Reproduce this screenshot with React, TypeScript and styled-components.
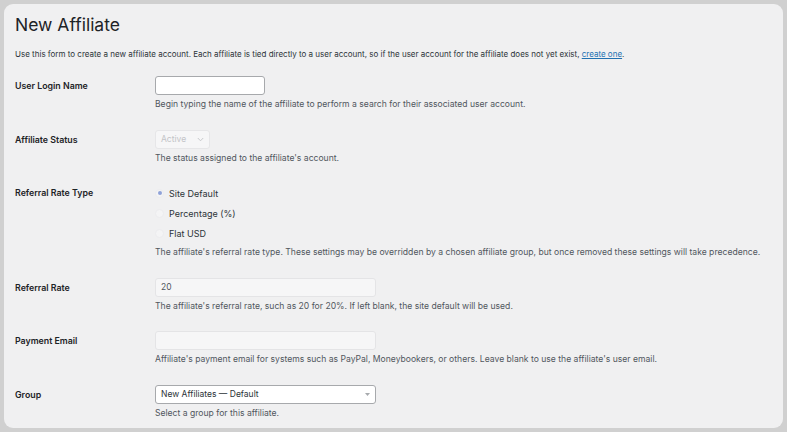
import React from 'react';
import styled, { createGlobalStyle } from 'styled-components';

const GlobalStyle = createGlobalStyle`
  html, body {
    margin: 0;
    padding: 0;
    background: #d0d0d0;
  }
  body {
    font-family: Inter, "Liberation Sans", Arial, sans-serif;
    color: #1d2327;
    -webkit-font-smoothing: antialiased;
  }
`

const Page = styled.div`
  padding: 4px;
  height: 432px;
  box-sizing: border-box;
`

const Card = styled.div`
  background: #f0f0f1;
  border-radius: 9px;
  height: 100%;
  box-sizing: border-box;
  padding: 11px 11px 0 11px;
`

const Title = styled.h1`
  margin: 0;
  font-size: 17.5px;
  font-weight: 400;
  line-height: 20px;
  color: #1d2327;
`

const Intro = styled.p`
  margin: 13px 0 16px;
  font-size: 8px;
  line-height: 12px;
  color: #2c3338;

  a {
    color: #2271b1;
    text-decoration: underline;
  }
`

const FormRow = styled.div`
  display: grid;
  grid-template-columns: 140px 1fr;
  margin-bottom: 19.6px;
`

const Label = styled.label`
  font-size: 8.8px;
  font-weight: 600;
  line-height: 19px;
  color: #1d2327;
`

const Field = styled.div`
  display: flex;
  flex-direction: column;
  align-items: flex-start;
`

const Description = styled.p`
  margin: 3px 0 0;
  font-size: 8.6px;
  line-height: 12px;
  color: #50575e;
`

const TextInput = styled.input<{ $w: number; $disabled?: boolean }>`
  width: ${p => p.$w}px;
  height: 19px;
  box-sizing: border-box;
  margin: 0;
  padding: 0 5px;
  border-radius: 3px;
  border: 1px solid ${p => (p.$disabled ? '#e4e4e6' : '#a7a9ac')};
  background: ${p => (p.$disabled ? '#f6f6f7' : '#ffffff')};
  font-family: inherit;
  font-size: 8.5px;
  color: #50575e;
  outline: none;
`

const SelectBox = styled.div<{ $w: number; $disabled?: boolean }>`
  width: ${p => p.$w}px;
  height: 19px;
  box-sizing: border-box;
  display: flex;
  align-items: center;
  justify-content: space-between;
  padding: 0 5px;
  border-radius: 3px;
  border: 1px solid ${p => (p.$disabled ? '#e6e6e8' : '#a7a9ac')};
  background: ${p => (p.$disabled ? '#f6f6f7' : '#ffffff')};
  font-size: 8.5px;
  color: ${p => (p.$disabled ? '#c3c4c7' : '#2c3338')};
`

const RadioList = styled.div`
  display: flex;
  flex-direction: column;
`

const RadioItem = styled.label`
  display: flex;
  align-items: center;
  gap: 5px;
  height: 20px;
  font-size: 9px;
  color: #2c3338;
`

const RadioDot = styled.span<{ $checked?: boolean }>`
  width: 9px;
  height: 9px;
  border-radius: 50%;
  box-sizing: border-box;
  border: 1px solid #ececee;
  background: #f4f4f5;
  display: flex;
  align-items: center;
  justify-content: center;

  &::after {
    content: '';
    width: 4px;
    height: 4px;
    border-radius: 50%;
    background: ${p => (p.$checked ? '#8fa2d8' : 'transparent')};
  }
`

const Chevron = () => (
  <svg width="7" height="5" viewBox="0 0 7 5">
    <path d="M0.8 1 L3.5 3.8 L6.2 1" fill="none" stroke="#c3c4c7" strokeWidth="0.9" />
  </svg>
)

const Caret = () => (
  <svg width="5" height="3" viewBox="0 0 5 3">
    <path d="M0 0 L5 0 L2.5 3 Z" fill="#a7aaad" />
  </svg>
)

const App = () => {
  return <Page>
    <GlobalStyle />
    <Card>
      <Title>New Affiliate</Title>
      <Intro>
        Use this form to create a new affiliate account. Each affiliate is tied directly to a user account, so if the user account for the affiliate does not yet exist, <a href="#">create one</a>.
      </Intro>

      <FormRow>
        <Label>User Login Name</Label>
        <Field>
          <TextInput $w={110} />
          <Description>Begin typing the name of the affiliate to perform a search for their associated user account.</Description>
        </Field>
      </FormRow>

      <FormRow>
        <Label>Affiliate Status</Label>
        <Field>
          <SelectBox $w={55} $disabled>
            <span>Active</span>
            <Chevron />
          </SelectBox>
          <Description>The status assigned to the affiliate's account.</Description>
        </Field>
      </FormRow>

      <FormRow>
        <Label>Referral Rate Type</Label>
        <Field>
          <RadioList>
            <RadioItem><RadioDot $checked />Site Default</RadioItem>
            <RadioItem><RadioDot />Percentage (%)</RadioItem>
            <RadioItem><RadioDot />Flat USD</RadioItem>
          </RadioList>
          <Description>The affiliate's referral rate type. These settings may be overridden by a chosen affiliate group, but once removed these settings will take precedence.</Description>
        </Field>
      </FormRow>

      <FormRow>
        <Label>Referral Rate</Label>
        <Field>
          <TextInput $w={221} $disabled defaultValue="20" />
          <Description>The affiliate's referral rate, such as 20 for 20%. If left blank, the site default will be used.</Description>
        </Field>
      </FormRow>

      <FormRow>
        <Label>Payment Email</Label>
        <Field>
          <TextInput $w={221} $disabled />
          <Description>Affiliate's payment email for systems such as PayPal, Moneybookers, or others. Leave blank to use the affiliate's user email.</Description>
        </Field>
      </FormRow>

      <FormRow>
        <Label>Group</Label>
        <Field>
          <SelectBox $w={221}>
            <span>New Affiliates — Default</span>
            <Caret />
          </SelectBox>
          <Description>Select a group for this affiliate.</Description>
        </Field>
      </FormRow>
    </Card>
  </Page>
}

export default App;
